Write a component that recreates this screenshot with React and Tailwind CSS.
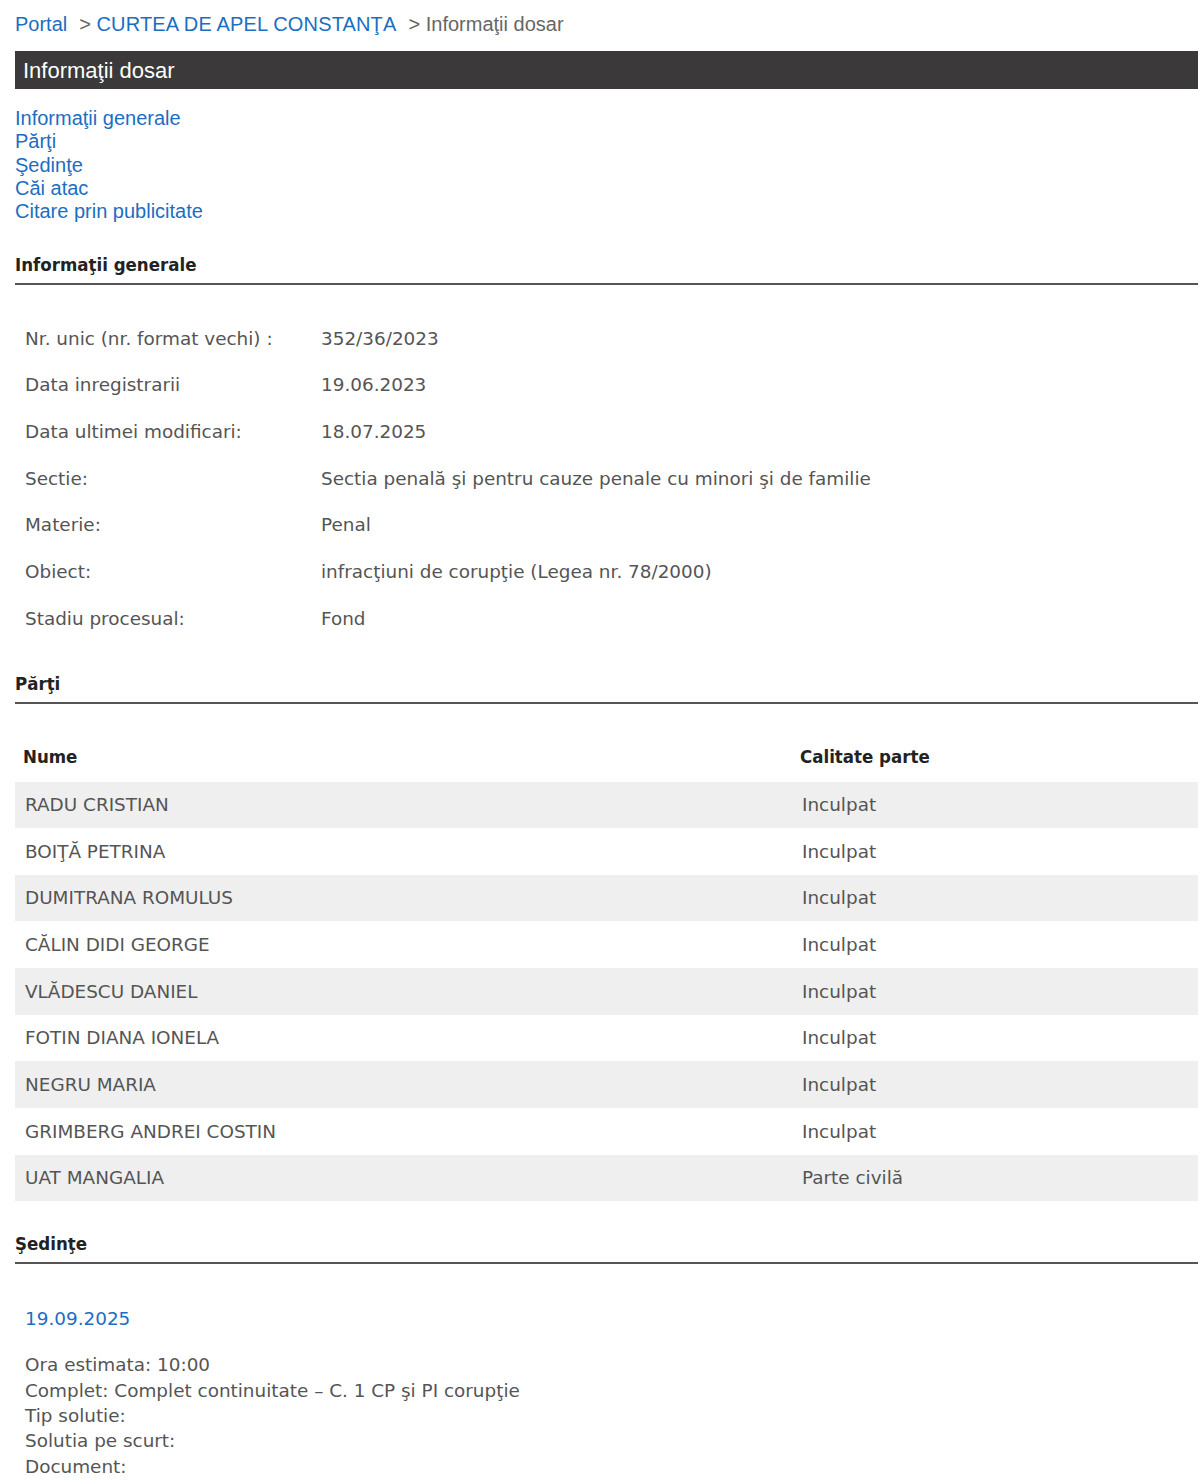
const info = [
  ['Nr. unic (nr. format vechi) :', '352/36/2023'],
  ['Data inregistrarii', '19.06.2023'],
  ['Data ultimei modificari:', '18.07.2025'],
  ['Sectie:', 'Sectia penală şi pentru cauze penale cu minori şi de familie'],
  ['Materie:', 'Penal'],
  ['Obiect:', 'infracţiuni de corupţie (Legea nr. 78/2000)'],
  ['Stadiu procesual:', 'Fond'],
]

const parti = [
  ['RADU CRISTIAN', 'Inculpat'],
  ['BOIŢĂ PETRINA', 'Inculpat'],
  ['DUMITRANA ROMULUS', 'Inculpat'],
  ['CĂLIN DIDI GEORGE', 'Inculpat'],
  ['VLĂDESCU DANIEL', 'Inculpat'],
  ['FOTIN DIANA IONELA', 'Inculpat'],
  ['NEGRU MARIA', 'Inculpat'],
  ['GRIMBERG ANDREI COSTIN', 'Inculpat'],
  ['UAT MANGALIA', 'Parte civilă'],
]

const links = ['Informaţii generale', 'Părţi', 'Şedinţe', 'Căi atac', 'Citare prin publicitate']

const arial = "font-['Liberation_Sans',Arial,sans-serif]"
const body = "font-['DejaVu_Sans',Verdana,sans-serif]"
const bold = "font-['DejaVu_Sans_Condensed','DejaVu_Sans',sans-serif] font-bold"

function SectionTitle({ children, className = '' }) {
  return (
    <div className={`${bold} ${className} text-[18.5px] leading-[24px] text-[#222] pb-[6px] border-b-2 border-[#555]`}>
      {children}
    </div>
  )
}

export default function App() {
  return (
    <div className="bg-white min-h-[1480px] w-[1200px] pl-[15px] pr-[2px]">
      <div className={`${arial} text-[20px] leading-[23px] pt-[13px] text-[#666]`}>
        <a className="text-[#1b6ec2]">Portal</a>
        <span className="ml-[12px]">&gt; </span>
        <a className="text-[#1b6ec2] tracking-[0.15px]">CURTEA DE APEL CONSTANŢA</a>
        <span className="ml-[12px]">&gt; Informaţii dosar</span>
      </div>

      <div className={`${arial} mt-[15px] h-[38px] bg-[#3b3939] text-white text-[22px] flex items-center px-[8px]`}>
        Informaţii dosar
      </div>

      <div className={`${arial} mt-[18px] text-[20px] leading-[23.25px] text-[#1b6ec2] flex flex-col items-start`}>
        {links.map(l => (
          <a key={l}>{l}</a>
        ))}
      </div>

      <SectionTitle className="mt-[30px]">Informaţii generale</SectionTitle>

      <div className={`${body} mt-[30px] text-[18.4px] text-[#555]`}>
        {info.map(([k, v]) => (
          <div key={k} className="grid grid-cols-[296px_1fr] h-[46.67px] items-center">
            <div className="pl-[10px]">{k}</div>
            <div className="pl-[10px]">{v}</div>
          </div>
        ))}
      </div>

      <SectionTitle className="mt-[30px]">Părţi</SectionTitle>

      <div className="mt-[31px]">
        <div className={`${bold} grid grid-cols-[776px_1fr] h-[46.67px] items-center pb-[2px] text-[18.5px] text-[#222]`}>
          <div className="pl-[8px]">Nume</div>
          <div className="pl-[9px]">Calitate parte</div>
        </div>
        {parti.map(([n, c], i) => (
          <div
            key={n}
            className={`${body} grid grid-cols-[776px_1fr] h-[46.67px] items-center text-[18.4px] text-[#555] ${i % 2 === 0 ? 'bg-[#efefef]' : 'bg-white'}`}
          >
            <div className="pl-[10px]">{n}</div>
            <div className="pl-[11px]">{c}</div>
          </div>
        ))}
      </div>

      <SectionTitle className="mt-[31px]">Şedinţe</SectionTitle>

      <div className={`${body} pl-[10px] text-[18.4px]`}>
        <div className="mt-[43px] leading-[24px] text-[#1b6ec2]">19.09.2025</div>
        <div className="mt-[21px] leading-[25.3px] text-[#555]">
          <div>Ora estimata: 10:00</div>
          <div>Complet: Complet continuitate – C. 1 CP şi PI corupţie</div>
          <div>Tip solutie:</div>
          <div>Solutia pe scurt:</div>
          <div>Document:</div>
        </div>
      </div>
    </div>
  )
}
